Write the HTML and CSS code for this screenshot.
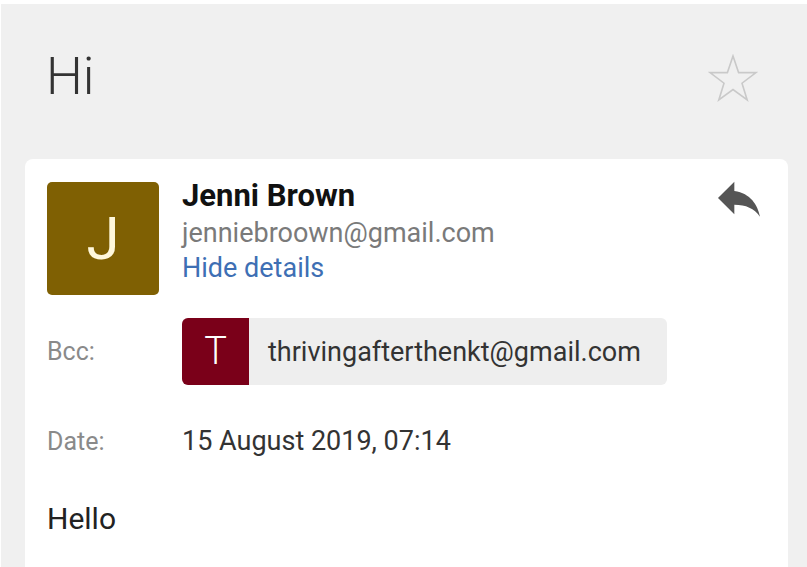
FILE: index.html
```html
<!DOCTYPE html>
<html>
<head>
<meta charset="utf-8">
<link rel="stylesheet" href="styles.css">
</head>
<body>
<div class="screen">
  <header class="subject-bar">
    <h1 class="subject">Hi</h1>
    <svg class="star" viewBox="0 0 50 50" width="50" height="50">
      <polygon points="25,2 30.6,18.6 48,18.6 34,29.2 39.2,46 25,35.6 10.8,46 16,29.2 2,18.6 19.4,18.6" fill="none" stroke="#c9c9c9" stroke-width="1.6" stroke-linejoin="miter"/>
    </svg>
  </header>
  <main class="card">
    <div class="sender-row">
      <div class="avatar">J</div>
      <div class="sender-info">
        <div class="sender-name">Jenni Brown</div>
        <div class="sender-email">jenniebroown@gmail.com</div>
        <div class="hide-details">Hide details</div>
      </div>
      <svg class="reply" viewBox="0 0 24 24" width="56" height="56">
        <path d="M10 9V5l-7 7 7 7v-4.1c5 0 8.5 1.6 11 5.1-1-5-4-10-11-11z" fill="#555"/>
      </svg>
    </div>
    <div class="detail-row bcc-row">
      <div class="label">Bcc:</div>
      <div class="chip">
        <div class="chip-avatar">T</div>
        <div class="chip-text">thrivingafterthenkt@gmail.com</div>
      </div>
    </div>
    <div class="detail-row date-row">
      <div class="label">Date:</div>
      <div class="value">15 August 2019, 07:14</div>
    </div>
    <div class="body-text">Hello</div>
  </main>
</div>
</body>
</html>
```
FILE: styles.css
```css
html, body {
  margin: 0;
  padding: 0;
  background: #ffffff;
}
body {
  font-family: Roboto, "Noto Sans", sans-serif;
  width: 807px;
  height: 567px;
  overflow: hidden;
}
.screen {
  margin-top: 4px;
  margin-left: 1px;
  background: #f0f0f0;
  height: 563px;
  display: flex;
  flex-direction: column;
}
.subject-bar {
  height: 155px;
  display: flex;
  align-items: flex-start;
  justify-content: space-between;
  padding: 0 49px 0 45px;
  box-sizing: border-box;
}
.subject {
  margin: 0;
  margin-top: 47px;
  font-size: 52px;
  line-height: 52px;
  font-weight: 300;
  color: #333333;
}
.star {
  margin-top: 50px;
}
.card {
  flex: 1;
  margin: 0 19px 0 24px;
  background: #ffffff;
  border-radius: 8px 8px 0 0;
  padding: 23px 0 0 22px;
  box-sizing: border-box;
}
.sender-row {
  display: flex;
  align-items: flex-start;
  position: relative;
}
.avatar {
  width: 112px;
  height: 113px;
  background: #7f6003;
  border-radius: 5px;
  color: #fff8dc;
  font-size: 60px;
  line-height: 113px;
  text-align: center;
  font-weight: 400;
}
.sender-info {
  margin-left: 23px;
  display: flex;
  flex-direction: column;
}
.sender-name {
  font-size: 31px;
  font-weight: 700;
  color: #111111;
  line-height: 28px;
}
.sender-email {
  font-size: 27px;
  color: #7a7a7a;
  line-height: 36px;
  margin-top: 5px;
}
.hide-details {
  font-size: 27px;
  color: #3e6fb4;
  line-height: 35px;
}
.reply {
  position: absolute;
  right: 21px;
  top: -12px;
}
.detail-row {
  display: flex;
  align-items: center;
}
.label {
  width: 135px;
  font-size: 25px;
  color: #8a8a8a;
}
.bcc-row {
  margin-top: 23px;
}
.chip {
  display: flex;
  align-items: center;
  width: 485px;
  height: 67px;
  background: #eeeeee;
  border-radius: 6px;
  overflow: hidden;
}
.chip-avatar {
  width: 67px;
  height: 67px;
  background: #7a0019;
  color: #ffffff;
  font-size: 38px;
  font-weight: 300;
  line-height: 67px;
  text-align: center;
}
.chip-text {
  margin-left: 19px;
  font-size: 27px;
  color: #333333;
}
.date-row {
  margin-top: 40px;
}
.value {
  font-size: 27px;
  color: #333333;
}
.body-text {
  margin-top: 44px;
  font-size: 30px;
  color: #222222;
}
```
